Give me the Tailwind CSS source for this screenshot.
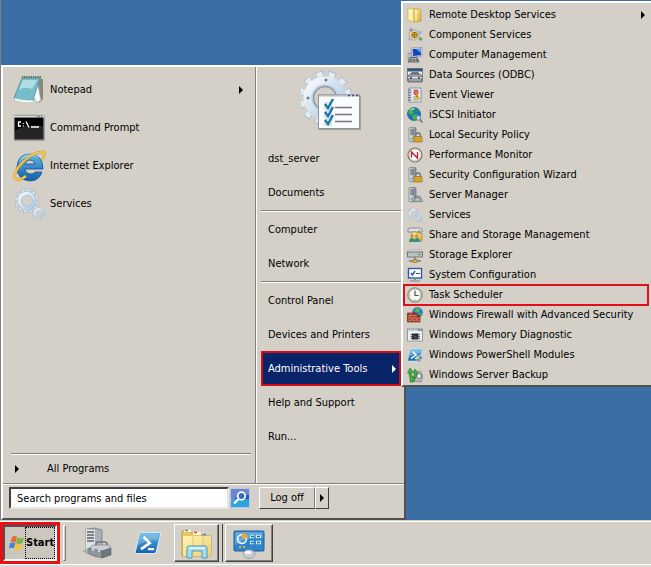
<!DOCTYPE html>
<html lang="en">
<head>
    <meta charset="UTF-8">
    <meta name="viewport" content="width=device-width, initial-scale=1.0">
    <title>Start Menu - Administrative Tools</title>
    <script src="https://cdn.jsdelivr.net/npm/@tailwindcss/browser@4"></script>
</head>
<body class="flex flex-col h-screen overflow-hidden bg-[#3a6ea5] font-['DejaVu_Sans_Condensed','DejaVu_Sans',sans-serif] text-[11px] leading-4 text-black">

    <!-- Shared icon parts -->
    <svg class="absolute size-0" xmlns="http://www.w3.org/2000/svg" aria-hidden="true">
        <defs>
            <linearGradient id="g-steel" x1="0" y1="0" x2="1" y2="1"><stop offset="0" stop-color="#f6f9fc"/><stop offset="1" stop-color="#a9c6de"/></linearGradient>
            <linearGradient id="g-blue" x1="0" y1="0" x2="0" y2="1"><stop offset="0" stop-color="#5fb4e6"/><stop offset="1" stop-color="#1460a8"/></linearGradient>
            <linearGradient id="g-gold" x1="0" y1="0" x2="1" y2="1"><stop offset="0" stop-color="#fff3a8"/><stop offset="1" stop-color="#dfa92c"/></linearGradient>
            <linearGradient id="g-folder" x1="0" y1="0" x2="1" y2="1"><stop offset="0" stop-color="#fff6b8"/><stop offset="1" stop-color="#ecd070"/></linearGradient>
            <linearGradient id="g-grey" x1="0" y1="0" x2="1" y2="0"><stop offset="0" stop-color="#eef1f3"/><stop offset="1" stop-color="#7d858c"/></linearGradient>
        </defs>
        <symbol id="gear" viewBox="0 0 32 32">
            <circle cx="16" cy="16" r="13" fill="none" stroke="#8fa9c4" stroke-width="5" stroke-dasharray="3.8 3"/>
            <circle cx="16" cy="16" r="13" fill="none" stroke="#dfebf6" stroke-width="3.6" stroke-dasharray="3 3.8" stroke-dashoffset="-.4"/>
            <circle cx="16" cy="16" r="9.5" fill="none" stroke="#9db6ce" stroke-width="5.600"/>
            <circle cx="16" cy="16" r="9.5" fill="none" stroke="url(#g-steel)" stroke-width="4.4"/>
        </symbol>
        <symbol id="gears" viewBox="0 0 32 32">
            <use href="#gear" x="1" y="1" width="24" height="24"/>
            <use href="#gear" x="18" y="18" width="13" height="13"/>
        </symbol>
        <symbol id="tower" viewBox="0 0 16 16">
            <path d="M2 1l5-1 2 1v13l-5 1-2-1z" fill="url(#g-grey)" stroke="#68727a" stroke-width=".7"/>
            <path d="M3 3h4M3 5h4M3 7h4" stroke="#465158" stroke-width=".9"/>
            <path d="M3 12h2" stroke="#4cae4c" stroke-width="1"/>
        </symbol>
        <symbol id="server-lock" viewBox="0 0 16 16">
            <use href="#tower" width="16" height="16"/>
            <path d="M8.500 10V8.500a2.500 2.500 0 0 1 5 0V10" fill="none" stroke="#707780" stroke-width="1.300"/>
            <rect x="7" y="9.500" width="8" height="5.500" rx=".6" fill="#e3ad34" stroke="#94701c" stroke-width=".8"/>
            <path d="M8 11.500h6M8 13.300h6" stroke="#b98a25" stroke-width=".5"/>
        </symbol>
        <symbol id="powershell" viewBox="0 0 32 32">
            <path d="M8 4h21q2 0 1.500 2l-5 20q-.5 2-2.500 2H3q-2 0-1.500-2l4.500-20q.5-2 2-2z" fill="url(#g-blue)" stroke="#d4ecfa" stroke-width="1.200"/>
            <path d="M7 5h22l-2 8Q15 12 4 19z" fill="#fff" opacity=".22"/>
            <path d="M11 9l7 7-10 7" fill="none" stroke="#fff" stroke-width="3"/>
            <path d="M16 23h7" stroke="#fff" stroke-width="2.600"/>
        </symbol>
        <symbol id="toolbox" viewBox="0 0 16 10">
            <path d="M5 3V1h6v2" fill="none" stroke="#59616a" stroke-width="1.200"/>
            <path d="M1 5l2-2h10l2 2v4H1z" fill="#a6adb5" stroke="#59616a" stroke-width=".7"/>
            <path d="M1 6h14" stroke="#e8ecef" stroke-width=".8"/>
            <path d="M4 5v2M12 5v2" stroke="#3f464d" stroke-width="1.200"/>
        </symbol>
    </svg>

    <!-- Desktop -->
    <main class="relative flex-1 min-h-0 border-l border-[#808080]">

        <!-- Start menu -->
        <section aria-label="Start menu" class="absolute left-0 bottom-0 w-[405px] border-2 border-t-white border-l-white border-r-[#505050] border-b-[#505050] bg-[#d4d0c8]">
            <div class="flex border-b border-[#808080]">
                <div class="flex-1 flex flex-col border-r border-[#808080] pt-1">
                    <ul>
                        <li>
                            <button class="flex items-center w-full h-[38px] pl-2 pr-3 text-left">
                                <svg class="size-9 mr-[3px]" viewBox="0 0 36 36">
                                    <path d="M25 6l7 1v20l-4 4z" fill="#8a8778"/>
                                    <path d="M26 8l4 20-4 3-5-8z" fill="#f4f6f4" stroke="#98a4a8" stroke-width=".7"/>
                                    <path d="M11 6h18l-7 22q-9 2-19-2z" fill="#76bfca" stroke="#4b8b98" stroke-width=".8"/>
                                    <path d="M12 8h14l-5 9Q14 14 8 18z" fill="#c6e8ec" opacity=".75"/>
                                    <path d="M4 26q9 3 18 2l-1 2Q11 31 4 28z" fill="#eef6f7"/>
                                    <path d="M11 5h19" stroke="#5d5f56" stroke-width="2" stroke-dasharray="1.200 1"/>
                                </svg>
                                <span class="flex-1">Notepad</span>
                                <svg class="w-1 h-2" viewBox="0 0 4 8"><path d="M0 0l4 4-4 4z"/></svg>
                            </button>
                        </li>
                        <li>
                            <button class="flex items-center w-full h-[38px] pl-2 pr-3 text-left">
                                <svg class="size-9 mr-[3px]" viewBox="0 0 36 36">
                                    <rect x="3" y="6" width="31" height="25" fill="#858585"/>
                                    <rect x="3" y="5" width="30" height="25" fill="#050505" stroke="#b9bcbe" stroke-width="1"/>
                                    <path d="M3 6.500h30" stroke="#dfe1e2" stroke-width="2"/>
                                    <path d="M26 6.500h6" stroke="#5c6164" stroke-width="1" stroke-dasharray="1 1"/>
                                    <path d="M4 21Q15 14 32 16v13H4z" fill="#fff" opacity=".13"/>
                                    <path d="M10 12H7.500v4H10M12.500 13v1M12.500 15.500v1M15 11.500l3 6M20 17h8" fill="none" stroke="#fff" stroke-width="1.300"/>
                                </svg>
                                <span>Command Prompt</span>
                            </button>
                        </li>
                        <li>
                            <button class="flex items-center w-full h-[38px] pl-2 pr-3 text-left">
                                <svg class="size-9 mr-[3px]" viewBox="0 0 36 36">
                                    <path d="M32 21H14q1 5 6 5 3 0 4-2h7q-3 9-12 9Q6 32 6 19 7 6 19 6q13 1 13 15zM14 16h10q-1-4-5-4-4 0-5 4z" fill="url(#g-blue)" stroke="#0d5297" stroke-width=".8" fill-rule="evenodd"/>
                                    <path d="M8 14q3-8 11-8 7 0 10 6-4-5-10-3-6 0-11 5z" fill="#9fe0fb" opacity=".7"/>
                                    <path d="M31 12q5-9 0-8-8 0-18 9Q2 24 4 30q3 4 11-2" fill="none" stroke="#cf962a" stroke-width="2.600"/>
                                    <path d="M31 12q5-9 0-8-8 0-18 9Q2 24 4 30q3 4 11-2" fill="none" stroke="#f8cb4a" stroke-width="1.600"/>
                                </svg>
                                <span>Internet Explorer</span>
                            </button>
                        </li>
                        <li>
                            <button class="flex items-center w-full h-[38px] pl-2 pr-3 text-left">
                                <svg class="size-9 mr-[3px]" viewBox="0 0 36 36"><use href="#gears" x="2" y="1" width="34" height="34"/></svg>
                                <span>Services</span>
                            </button>
                        </li>
                    </ul>
                    <div class="mt-auto ml-2 mr-1 border-t border-b border-t-[#808080] border-b-white"></div>
                    <button class="flex items-center h-7 pl-3 text-left">
                        <svg class="w-1 h-2 mr-7" viewBox="0 0 4 8"><path d="M0 0l4 4-4 4z"/></svg>
                        <span>All Programs</span>
                    </button>
                </div>

                <div class="w-[148px] border-l border-white pb-[29px]">
                    <svg class="w-16 h-[75px] ml-11" viewBox="0 0 64 75">
                        <g transform="rotate(6 24 31)">
                            <circle cx="24" cy="31" r="23" fill="none" stroke="#9db3c8" stroke-width="8" stroke-dasharray="7 5.040"/>
                            <circle cx="24" cy="31" r="23" fill="none" stroke="#dfebf5" stroke-width="6.600" stroke-dasharray="6 6.040" stroke-dashoffset="-.5"/>
                        </g>
                        <circle cx="24" cy="31" r="16.500" fill="none" stroke="url(#g-steel)" stroke-width="10"/>
                        <circle cx="24" cy="31" r="11.500" fill="none" stroke="#8895a2" stroke-width="1.500"/>
                        <circle cx="24" cy="31" r="13" fill="none" stroke="#c3ced8" stroke-width="1.500"/>
                        <circle cx="25" cy="13" r="1.500" fill="#6c7c8c"/><circle cx="7" cy="31" r="1.500" fill="#6c7c8c"/>
                        <rect x="18" y="29" width="42" height="34" fill="#8b8d90" opacity=".7"/>
                        <rect x="17.500" y="27.500" width="41" height="34" fill="#fafbfd" stroke="#8f959b"/>
                        <path d="M18 28.500h40" stroke="#b5bcc3" stroke-width="2"/><path d="M47 28.500h10" stroke="#4b535b" stroke-width="1.500" stroke-dasharray="2 2"/>
                        <path d="M24 36h6v6h-6zM24 44h6v6h-6zM24 52h6v6h-6z" fill="#fff" stroke="#a9bccb" stroke-width=".8"/>
                        <path d="M24 37l3 4 5-9M24 45l3 4 5-9M24 53l3 4 5-9" fill="none" stroke="#197ba5" stroke-width="2.400"/>
                        <path d="M34 40.500h17M34 47.500h17M34 54.500h17" stroke="#77737f" stroke-width="1.400"/>
                    </svg>
                    <ul>
                        <li><button class="flex items-center w-full h-[34px] pl-[11px]">dst_server</button></li>
                        <li><button class="flex items-center w-full h-[34px] pl-[11px]">Documents</button></li>
                        <li class="ml-1 mb-px border-t border-b border-t-[#808080] border-b-white"></li>
                        <li><button class="flex items-center w-full h-[34px] pl-[11px]">Computer</button></li>
                        <li><button class="flex items-center w-full h-[34px] pl-[11px]">Network</button></li>
                        <li class="ml-1 mb-px border-t border-b border-t-[#808080] border-b-white"></li>
                        <li><button class="flex items-center w-full h-[34px] pl-[11px]">Control Panel</button></li>
                        <li><button class="flex items-center w-full h-[34px] pl-[11px]">Devices and Printers</button></li>
                        <li class="pl-1 pr-[3px]">
                            <button aria-haspopup="menu" aria-expanded="true" class="flex items-center justify-between w-full h-[35px] -mt-px pl-[5px] pr-[3px] border-2 border-[#d01018] bg-[#0a246a] text-white">
                                Administrative Tools
                                <svg class="w-1 h-2" viewBox="0 0 4 8" fill="#fff"><path d="M0 0l4 4-4 4z"/></svg>
                            </button>
                        </li>
                        <li><button class="flex items-center w-full h-[34px] pl-[11px]">Help and Support</button></li>
                        <li><button class="flex items-center w-full h-[34px] pl-[11px]">Run...</button></li>
                    </ul>
                </div>
            </div>

            <!-- Search and log off -->
            <form class="flex items-center h-[34px] pl-[6px] pb-[7px] border-t border-white">
                <label for="search" class="sr-only">Search</label>
                <input id="search" type="text" value="Search programs and files" class="w-[220px] h-[22px] px-[6px] border-2 border-t-[#404040] border-l-[#404040] border-r-[#e8e6e0] border-b-[#e8e6e0] bg-white">
                <button type="button" aria-label="Search" class="ml-px">
                    <svg class="size-5" viewBox="0 0 20 20">
                        <rect x=".5" y=".5" width="19" height="19" rx="1.500" fill="#2853b4" stroke="#b9c9e4"/>
                        <path d="M1 11h18v8H1z" fill="#2aa4dc"/><path d="M1 1h18v6Q10 6 1 13z" fill="#98a9dc" opacity=".6"/>
                        <circle cx="11.500" cy="8" r="3.800" fill="#366dbd" stroke="#fff" stroke-width="1.800"/>
                        <path d="M8.500 11L4 15.500" stroke="#fff" stroke-width="2.400"/>
                    </svg>
                </button>
                <button type="button" class="w-14 h-[22px] ml-[9px] border border-t-white border-l-white border-r-[#808080] border-b-[#404040]">Log off</button>
                <button type="button" aria-label="Shutdown options" class="flex items-center justify-center w-[14px] h-[22px] border border-t-white border-l-white border-r-[#404040] border-b-[#404040]">
                    <svg class="w-1 h-2" viewBox="0 0 4 8"><path d="M0 0l4 4-4 4z"/></svg>
                </button>
            </form>
        </section>

        <!-- Administrative Tools submenu -->
        <ul aria-label="Administrative Tools" class="absolute top-px left-[400px] right-0 pt-[2px] border-2 border-r-0 border-t-white border-l-white border-b-[#505050] bg-[#d4d0c8]">
            <li>
                <button class="flex items-center w-full h-5 pl-1 pr-[6px] text-left">
                    <svg class="size-4 mr-[6px]" viewBox="0 0 16 16"><path d="M1 1l6 1v13l-6-2z" fill="#fff0a0" stroke="#c9a545" stroke-width=".6"/><path d="M7 2h6l1 1v11l-7 1z" fill="url(#g-gold)" stroke="#b98d2c" stroke-width=".6"/><path d="M9 3v11M3 3v10" stroke="#fff8c8"/></svg>
                    <span class="flex-1">Remote Desktop Services</span>
                    <svg class="w-1 h-2" viewBox="0 0 4 8"><path d="M0 0l4 4-4 4z"/></svg>
                </button>
            </li>
            <li>
                <button class="flex items-center w-full h-5 pl-1 text-left">
                    <svg class="size-4 mr-[6px]" viewBox="0 0 16 16"><circle cx="7" cy="8" r="5" fill="#dad6cb" stroke="#a29d91" stroke-width=".8"/><circle cx="7.500" cy="8" r="2.800" fill="#f2b81e" stroke="#a8740c" stroke-width="1"/><path d="M7.500 5v6M4.500 8h6" stroke="#805d16" stroke-width=".8"/><circle cx="4" cy="3" r="1.800" fill="#8591cc"/><circle cx="13" cy="5.500" r="1.800" fill="#85b9e0"/><circle cx="13.500" cy="12" r="1.800" fill="#55ad60"/><circle cx="2.500" cy="12" r="1.500" fill="#b5afc4"/></svg>
                    <span>Component Services</span>
                </button>
            </li>
            <li>
                <button class="flex items-center w-full h-5 pl-1 text-left">
                    <svg class="size-4 mr-[6px]" viewBox="0 0 16 16"><path d="M4 1l11-.5V9L5 10z" fill="#e0e5ec" stroke="#7e8ba0" stroke-width=".7"/><path d="M5.500 2l8.500-.3v6.500l-8 .8z" fill="#1645b8"/><path d="M9 2l5-.2v4z" fill="#6fa0ed"/><path d="M1 6h3v6H1z" fill="#bcc3cc" stroke="#7a838d" stroke-width=".6"/><path d="M3 10.500h7l2 4.500H1z" fill="#a4abb2" stroke="#4b535b" stroke-width=".8"/><path d="M3 13h8" stroke="#30363c" stroke-width="1" stroke-dasharray="2 1"/></svg>
                    <span>Computer Management</span>
                </button>
            </li>
            <li>
                <button class="flex items-center w-full h-5 pl-1 text-left">
                    <svg class="size-4 mr-[6px]" viewBox="0 0 16 16"><rect x=".5" y="1.500" width="15" height="12" fill="#eceff1" stroke="#7d8790"/><path d="M.5 3h15" stroke="#35557e" stroke-width="3"/><path d="M5 8V6h6v2" fill="none" stroke="#4e555c" stroke-width="1.300"/><path d="M1 9l2-2h10l2 2v6H1z" fill="#9ca3a8" stroke="#50585e" stroke-width=".8"/><path d="M1 10.500h14" stroke="#e2e6e8"/><path d="M4 9.500v2.500M12 9.500v2.500" stroke="#33393e" stroke-width="1.300"/></svg>
                    <span>Data Sources (ODBC)</span>
                </button>
            </li>
            <li>
                <button class="flex items-center w-full h-5 pl-1 text-left">
                    <svg class="size-4 mr-[6px]" viewBox="0 0 16 16"><path d="M2 1h12v14H2z" fill="#e9edf3" stroke="#74839a" stroke-width=".8"/><path d="M4 1v14" stroke="#bac4d2"/><path d="M1 3h3M1 5.500h3M1 8h3M1 10.500h3M1 13h3" stroke="#59697e" stroke-width=".9"/><path d="M6 3h6M6 13h6M6 10h2" stroke="#8c9ab0" stroke-width=".8"/><circle cx="9" cy="5.500" r="2.500" fill="#d42820"/><path d="M8 4.500l2 2m0-2l-2 2" stroke="#fff" stroke-width=".8"/><path d="M10 6.500l3 5.500H7z" fill="#f6d42b" stroke="#ad8619" stroke-width=".5"/><path d="M10 8.500v2" stroke="#222" stroke-width=".8"/></svg>
                    <span>Event Viewer</span>
                </button>
            </li>
            <li>
                <button class="flex items-center w-full h-5 pl-1 text-left">
                    <svg class="size-4 mr-[6px]" viewBox="0 0 16 16"><circle cx="7" cy="7" r="6.500" fill="#1878b5" stroke="#0c4a79" stroke-width=".6"/><path d="M2 3q3-3 6-2L6 4l1 2-3 2-3-2zM7 7l4 1-1 4-3 1-2-3zM10 2l3 3-3-1z" fill="#46ae4a"/><path d="M3 3q3-2 5-1" stroke="#b5e5f2" fill="none"/><circle cx="11.500" cy="11" r="2.300" fill="#cbdde9" stroke="#6c8296"/><path d="M13 12.500l2.500 3" stroke="#687786" stroke-width="1.500"/></svg>
                    <span>iSCSI Initiator</span>
                </button>
            </li>
            <li>
                <button class="flex items-center w-full h-5 pl-1 text-left">
                    <svg class="size-4 mr-[6px]" viewBox="0 0 16 16"><use href="#server-lock"/></svg>
                    <span>Local Security Policy</span>
                </button>
            </li>
            <li>
                <button class="flex items-center w-full h-5 pl-1 text-left">
                    <svg class="size-4 mr-[6px]" viewBox="0 0 16 16"><circle cx="8" cy="8" r="7" fill="#fff" stroke="#7d7067" stroke-width="1.200"/><circle cx="8" cy="8" r="5.700" fill="none" stroke="#d5c7bc"/><path d="M4.500 10.500V5l6 6V5" fill="none" stroke="#c42222" stroke-width="1.400"/></svg>
                    <span>Performance Monitor</span>
                </button>
            </li>
            <li>
                <button class="flex items-center w-full h-5 pl-1 text-left">
                    <svg class="size-4 mr-[6px]" viewBox="0 0 16 16"><use href="#server-lock"/></svg>
                    <span>Security Configuration Wizard</span>
                </button>
            </li>
            <li>
                <button class="flex items-center w-full h-5 pl-1 text-left">
                    <svg class="size-4 mr-[6px]" viewBox="0 0 16 16"><use href="#tower" width="16" height="16"/><use href="#toolbox" x="5" y="8" width="11" height="8"/></svg>
                    <span>Server Manager</span>
                </button>
            </li>
            <li>
                <button class="flex items-center w-full h-5 pl-1 text-left">
                    <svg class="size-4 mr-[6px]" viewBox="0 0 16 16"><use href="#gears" width="16" height="16"/></svg>
                    <span>Services</span>
                </button>
            </li>
            <li>
                <button class="flex items-center w-full h-5 pl-1 text-left">
                    <svg class="size-4 mr-[6px]" viewBox="0 0 16 16"><path d="M1 2l2-1h10l2 1v3H1z" fill="#dde1e4" stroke="#656c73" stroke-width=".7"/><path d="M11 4h2" stroke="#39a53c"/><path d="M5 5h4l1 1h5v8H5z" fill="url(#g-gold)" stroke="#a9832c" stroke-width=".7"/><circle cx="5" cy="9" r="1.700" fill="#c78b58"/><circle cx="9.500" cy="9" r="1.700" fill="#c78b58"/><path d="M2 15q0-4 3-4t3 4z" fill="#3b9b54"/><path d="M7 15q0-4 3-4t3 4z" fill="#3b8b93"/></svg>
                    <span>Share and Storage Management</span>
                </button>
            </li>
            <li>
                <button class="flex items-center w-full h-5 pl-1 text-left">
                    <svg class="size-4 mr-[6px]" viewBox="0 0 16 16"><path d="M2 3h12l1.500 2H.5z" fill="#f4f5f6" stroke="#81878d" stroke-width=".6"/><path d="M.5 5h15v5H.5z" fill="#bbc0c4" stroke="#5d646a" stroke-width=".8"/><path d="M11 7.500h2.500" stroke="#2eac36" stroke-width="1.300"/><path d="M8 10v4M2 14h12" stroke="#777d83" stroke-width="1.500"/><path d="M6 12.500h4v3H6z" fill="#e4b23c" stroke="#8e6b1d" stroke-width=".6"/></svg>
                    <span>Storage Explorer</span>
                </button>
            </li>
            <li>
                <button class="flex items-center w-full h-5 pl-1 text-left">
                    <svg class="size-4 mr-[6px]" viewBox="0 0 16 16"><rect x="1.500" y="1.500" width="13" height="9.500" fill="#fff" stroke="#3656aa" stroke-width="1.400"/><path d="M4 6l1.500 2L8 4" fill="none" stroke="#2458bb" stroke-width="1.500"/><path d="M9 6.500h4" stroke="#47505f"/><path d="M7 11.500h2V13H7z" fill="#89909a"/><path d="M3 14h10" stroke="#a0a5ab" stroke-width="1.800"/></svg>
                    <span>System Configuration</span>
                </button>
            </li>
            <li class="relative">
                <button class="flex items-center w-full h-5 pl-1 text-left">
                    <svg class="size-4 mr-[6px]" viewBox="0 0 16 16"><circle cx="8" cy="8" r="7.300" fill="#b5b3a8" stroke="#77756d" stroke-width=".7"/><circle cx="8" cy="8" r="5.800" fill="#f8f9f3" stroke="#d0cec4" stroke-width=".6"/><path d="M8 4v4.500h3.500" fill="none" stroke="#4b555d" stroke-width="1.200"/><path d="M8 2.800v.8M8 12.500v.8M2.800 8h.8M12.500 8h.8" stroke="#707980" stroke-width=".8"/></svg>
                    <span>Task Scheduler</span>
                </button>
                <!-- Highlight frame -->
                <span class="absolute -inset-y-px left-0 right-[2px] border-2 border-[#e01018] pointer-events-none"></span>
            </li>
            <li>
                <button class="flex items-center w-full h-5 pl-1 text-left">
                    <svg class="size-4 mr-[6px]" viewBox="0 0 16 16"><circle cx="10.500" cy="5.500" r="5" fill="#2a83cf" stroke="#185a95" stroke-width=".5"/><path d="M9 1l4 1-1 3-3 1-1-2zM12 6l3 1-2 3z" fill="#57b84b"/><path d="M.5 6h9v2.500H13V15H.5z" fill="#a83a25" stroke="#6f2114" stroke-width=".7"/><path d="M1 8.500h9M1 11h12M1 13.200h12M4 6v2.500M7 8.500V11M3 8.500V11M5 11v2M9.500 11v2M3 13v2M7.500 13v2M11 13v2" stroke="#dc9a84" stroke-width=".6"/></svg>
                    <span>Windows Firewall with Advanced Security</span>
                </button>
            </li>
            <li>
                <button class="flex items-center w-full h-5 pl-1 text-left">
                    <svg class="size-4 mr-[6px]" viewBox="0 0 16 16"><rect x=".5" y="2" width="15" height="12" fill="#edf0f2" stroke="#81898f" stroke-width=".8"/><path d="M1 3h14" stroke="#b2bac0" stroke-width="1.500"/><path d="M11 3h4" stroke="#3f4850" stroke-dasharray="1 .5"/><rect x="5" y="6.500" width="6.500" height="6" fill="#2c3033"/><path d="M3.500 7.500h1.500M3.500 9.500h1.500M3.500 11.500h1.500M11.500 7.500H13M11.500 9.500H13M11.500 11.500H13" stroke="#43494d" stroke-width=".9"/><path d="M6.500 8.500l3 2.500" stroke="#858b8f" stroke-width=".8"/></svg>
                    <span>Windows Memory Diagnostic</span>
                </button>
            </li>
            <li>
                <button class="flex items-center w-full h-5 pl-1 text-left">
                    <svg class="size-4 mr-[6px]" viewBox="0 0 16 16"><use href="#powershell" width="16" height="16"/><path d="M12.500 8.500q1.500 1 3 1 .2 4.500-3 6-3.200-1.500-3-6 1.500 0 3-1z" fill="#3c7fd4" stroke="#eef4fa" stroke-width=".6"/><path d="M12.500 9v3H10V10zM12.500 12H15q-.5 2-2.500 3z" fill="#f3cf3e"/></svg>
                    <span>Windows PowerShell Modules</span>
                </button>
            </li>
            <li>
                <button class="flex items-center w-full h-5 pl-1 text-left">
                    <svg class="size-4 mr-[6px]" viewBox="0 0 16 16"><path d="M8 6l5-2 3 5-2 6-7-1z" fill="#b4babf" stroke="#747c82" stroke-width=".7"/><circle cx="12" cy="9" r="2.500" fill="#e9ecee" stroke="#777"/><path d="M3 1L.5 6H2q0 5 3 7l1-3Q4 8 4.500 5H6zM8 2L6 6h1.500q0 3-1.500 5l2 1q2-3 2-6H11zM3 11l5-1-1 5H3z" fill="#43b13b" stroke="#23762a" stroke-width=".6"/></svg>
                    <span>Windows Server Backup</span>
                </button>
            </li>
        </ul>
    </main>

    <!-- Taskbar -->
    <footer class="relative flex items-center h-[47px] shrink-0 pb-[3px] bg-[#d4d0c8] border-t border-[#d4d0c8] shadow-[inset_0_1px_0_#ffffff]">
        <div class="border-[3px] border-[#ee0d12]">
            <button class="flex items-center w-[54px] h-9 pl-1 border-2 border-t-[#505050] border-l-[#505050] border-r-white border-b-white bg-[#cbc7be] font-bold">
                <svg class="size-4 shrink-0" viewBox="0 0 16 16">
                    <path d="M3 2q3-2 5 0L6.500 7.500Q4 6 1.500 7.500z" fill="#ee6634"/>
                    <path d="M8.500 2.500q3 2 6.500 0l-1.500 5.500Q10 10 7 8z" fill="#77b840"/>
                    <path d="M1.200 8.300q3-1.500 5 0L4.800 13.500Q2.500 12-.2 13.500z" fill="#4684d0"/>
                    <path d="M6.800 8.800q3 2 6.200 0L11.500 14.300q-3.200 2-6.200 0z" fill="#f5c432"/>
                </svg>
                <span class="flex items-center h-8 border border-dotted border-black">Start</span>
            </button>
        </div>
        <div class="w-[3px] h-9 ml-[3px] border border-l-white border-t-white border-r-[#808080] border-b-[#808080]"></div>
        <nav aria-label="Taskbar" class="flex items-center ml-4">
            <button aria-label="Server Manager" class="flex items-center justify-center size-8">
                <svg class="size-8" viewBox="0 0 32 32">
                    <path d="M4 2l9-1 7 2v22l-7 3-9-2z" fill="#a9b0b6" stroke="#757e85" stroke-width=".8"/>
                    <path d="M4 2l9 1v25l-9-2z" fill="#dfe3e6"/>
                    <path d="M5 5h7M5 8h7M5 11h7M5 14h7" stroke="#5c666d" stroke-width="1.300"/>
                    <path d="M5 22h5" stroke="#5ba55b" stroke-width="1.500"/>
                    <path d="M0 24l5-2 15 6-5 3z" fill="#a4a9ad"/>
                    <path d="M14 19v-2q0-2 2-2h7q2 0 2 2v2" fill="none" stroke="#6d757c" stroke-width="1.600"/>
                    <path d="M7 21l4-3h16l2 3-5 3H9z" fill="#c9ced3" stroke="#757d84" stroke-width=".6"/>
                    <path d="M7 21l13 3v7L7 27z" fill="#8f979e" stroke="#626a71" stroke-width=".6"/>
                    <path d="M20 24l9-3v7l-9 3z" fill="#6f777e" stroke="#565e65" stroke-width=".6"/>
                    <path d="M11 21v3M17 22v3" stroke="#eceff1" stroke-width="1.400"/>
                </svg>
            </button>
            <button aria-label="Windows PowerShell" class="flex items-center justify-center size-8 ml-[18px]">
                <svg class="w-[30px] h-7" viewBox="0 0 32 32"><use href="#powershell"/></svg>
            </button>
            <button aria-label="Windows Explorer" class="flex items-center justify-center w-[45px] h-[38px] ml-[10px] border border-t-white border-l-white border-r-[#404040] border-b-[#404040] shadow-[inset_-1px_-1px_0_#808080]">
                <svg class="size-8" viewBox="0 0 32 32">
                    <path d="M1 4h8l1 2h10l1 3h9v20H1z" fill="#e8c65d" stroke="#b48f31" stroke-width=".8"/>
                    <path d="M3 3h7v2H3zM12 5h8v3h-8z" fill="#fffbe0"/>
                    <path d="M4 3.500h3" stroke="#3d9e4e" stroke-width="1.500"/><path d="M13 5.500h3" stroke="#cc4d32" stroke-width="1.500"/><path d="M22 7.500h3" stroke="#3c8ec8" stroke-width="1.500"/>
                    <path d="M2 9h28v20H2z" fill="url(#g-folder)"/>
                    <path d="M12 9v19M22 9v19" stroke="#dcbc5c" stroke-width=".8"/>
                    <path d="M6 31V21q0-2 2-2h16q2 0 2 2v10h-5v-7H11v7z" fill="#a4dcef" stroke="#4c9dbb" stroke-width="1"/>
                    <path d="M8 21h16" stroke="#e9faff" stroke-width="1.500"/>
                </svg>
            </button>
            <div class="w-1 h-[38px] border-r border-[#404040]"></div>
            <button aria-label="Control Panel" class="flex items-center justify-center w-12 h-[38px] ml-[2px] border border-t-white border-l-white border-r-[#404040] border-b-[#404040] shadow-[inset_-1px_-1px_0_#808080]">
                <svg class="size-8" viewBox="0 0 32 32">
                    <rect x="1" y="4" width="30" height="20" rx="1" fill="#2f86c9" stroke="#1c5f9c"/>
                    <path d="M2 5h28v6Q15 9 2 18z" fill="#8cc8ee" opacity=".5"/>
                    <circle cx="9" cy="12" r="4.300" fill="none" stroke="#e4f5ff" stroke-width="1.800"/>
                    <path d="M9 12V6q5 0 6 5z" fill="#f0a335"/>
                    <path d="M17 9.500h4M23 9.500h5M17 15.500h4M23 15.500h5" stroke="#c6ecff" stroke-width="3.500"/>
                    <path d="M18 9.500h3M24 9.500h3M18 15.500h3M24 15.500h3" stroke="#1e71af" stroke-width="1.500"/>
                    <circle cx="7" cy="20" r="1.100" fill="#f3bc54"/><circle cx="11" cy="20" r="1.100" fill="#f3bc54"/>
                    <ellipse cx="16" cy="27" rx="6" ry="4.300" fill="#c8cdd1" stroke="#838b91" stroke-width=".7"/>
                    <ellipse cx="15" cy="25.500" rx="3.500" ry="1.700" fill="#f6f8f9"/>
                </svg>
            </button>
        </nav>
        <div class="absolute inset-x-0 bottom-0 h-[3px] border-t border-white bg-[#dcdad4]"></div>
    </footer>

</body>
</html>
